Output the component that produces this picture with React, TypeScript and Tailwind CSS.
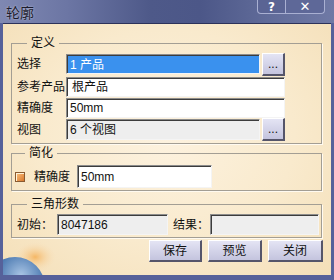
import React from "react";

const FONT = "font-['Liberation_Sans','Noto_Sans_CJK_SC',sans-serif]";

function Sunken({ className = "", children }: { className?: string; children?: React.ReactNode }) {
  return (
    <div
      className={`flex items-center border-t border-l border-t-[#8c8c8c] border-l-[#8c8c8c] border-b border-r border-b-[#f4f4f4] border-r-[#f4f4f4] shadow-[inset_1px_1px_0_#3c3c3c] pl-[3px] pt-[1px] text-[12px] leading-[14px] ${className}`}
    >
      {children}
    </div>
  );
}

function Btn({ className = "", children }: { className?: string; children?: React.ReactNode }) {
  return (
    <div
      className={`flex items-center justify-center border-t border-l border-t-[#ffffff] border-l-[#ffffff] border-b-2 border-r-2 border-b-[#55556a] border-r-[#55556a] bg-gradient-to-b from-[#e4e4f4] to-[#c4c4de] text-[12px] leading-[14px] text-[#111] ${className}`}
    >
      {children}
    </div>
  );
}

function Group({ title, className = "", children }: { title: string; className?: string; children?: React.ReactNode }) {
  return (
    <fieldset className={`border border-[#a39e94] shadow-[1px_1px_0_#fffaf0] ml-0 mr-[1px] ${className}`}>
      <legend className="ml-[10px] px-[4px] text-[12px] leading-[14px] text-[#111]">{title}</legend>
      {children}
    </fieldset>
  );
}

export default function App() {
  return (
    <div className={`w-[334px] h-[280px] flex flex-col overflow-hidden bg-[#56619a] ${FONT}`}>
      {/* title bar */}
      <div className="h-[23px] flex items-center relative bg-[linear-gradient(to_right,#7f88b2_0%,#6c76a4_20%,#4e5989_45%,#4c5788_60%,#606b99_80%,#6f79a5_100%)]">
        <span className="ml-[6px] text-[14px] leading-[16px] text-[#1c1c2c] font-['Noto_Sans_CJK_SC',sans-serif] [text-shadow:0_0_2px_#c8cce4]">
          轮廓
        </span>
        <div className="absolute right-[9px] top-0 flex">
          <div className="w-[29px] h-[14px] flex items-center justify-center border border-t-0 border-[#a9b0d2] rounded-bl-[4px] bg-[#5a6494] text-white text-[12px] leading-[12px] font-bold font-['DejaVu_Sans',sans-serif]">
            ?
          </div>
          <div className="w-[40px] h-[14px] -ml-px flex items-center justify-center border border-t-0 border-[#a9b0d2] rounded-br-[4px] bg-[#5e6898] text-white text-[13px] leading-[12px] font-bold font-['DejaVu_Sans',sans-serif]">
            ✕
          </div>
        </div>
      </div>

      {/* body */}
      <div className="flex-1 mx-[3px] mb-[5px] border-t border-[#2c325a] relative flex flex-col px-[8px] bg-[radial-gradient(ellipse_at_50%_45%,#fdf2df_0%,#f9eacd_55%,#f4dfb8_100%)] text-[#111]">
        {/* decorative globe */}
        <svg className="absolute left-0 bottom-0" width="60" height="40" viewBox="0 0 60 40">
          <defs>
            <radialGradient id="glow" cx="0.55" cy="0.5" r="0.5">
              <stop offset="0" stopColor="#f5b25a" stopOpacity="0.9" />
              <stop offset="1" stopColor="#f8e4c4" stopOpacity="0" />
            </radialGradient>
            <radialGradient id="globe" cx="0.6" cy="0.3" r="0.8">
              <stop offset="0" stopColor="#a8c4e4" />
              <stop offset="0.5" stopColor="#4a78b0" />
              <stop offset="1" stopColor="#1e3e70" />
            </radialGradient>
          </defs>
          <ellipse cx="30" cy="22" rx="22" ry="16" fill="url(#glow)" />
          <circle cx="12" cy="52" r="30" fill="url(#globe)" />
        </svg>

        <Group title="定义" className="mt-[12px] pl-[5px] pr-[36px] pt-[2px] pb-[2px]">
          <div className="h-[24px] flex items-center">
            <span className="w-[49px] text-[12px] leading-[14px]">选择</span>
            <Sunken className="flex-1 h-[20px] bg-[#3a91ee] text-white">1 产品</Sunken>
            <Btn className="w-[23px] h-[23px] ml-[2px] text-[10px]">...</Btn>
          </div>
          <div className="h-[21px] flex items-center">
            <span className="w-[49px] text-[12px] leading-[14px]">参考产品</span>
            <Sunken className="flex-1 h-[20px] bg-white pl-[5px]">根产品</Sunken>
          </div>
          <div className="h-[21px] flex items-center">
            <span className="w-[49px] text-[12px] leading-[14px]">精确度</span>
            <Sunken className="flex-1 h-[20px] bg-white">50mm</Sunken>
          </div>
          <div className="h-[23px] flex items-center">
            <span className="w-[49px] text-[12px] leading-[14px]">视图</span>
            <Sunken className="flex-1 h-[21px] bg-[#eeeeee]">6 个视图</Sunken>
            <Btn className="w-[23px] h-[23px] ml-[2px] text-[10px]">...</Btn>
          </div>
        </Group>

        <Group title="简化" className="mt-[2px] pl-[3px] pt-[5px] pb-[2px]">
          <div className="h-[23px] flex items-center">
            <div className="w-[10px] h-[10px] border border-[#8a5a30] bg-gradient-to-br from-[#fbc27e] to-[#d8782a] shadow-[inset_1px_1px_0_#fff2d8]" />
            <span className="ml-[9px] w-[43px] text-[12px] leading-[14px]">精确度</span>
            <Sunken className="w-[135px] h-[23px] bg-white">50mm</Sunken>
          </div>
        </Group>

        <Group title="三角形数" className="mt-[6px] pl-[5px] pt-[3px] pb-[2px]">
          <div className="h-[21px] flex items-center">
            <span className="w-[40px] text-[12px] leading-[14px]">初始：</span>
            <Sunken className="w-[111px] h-[21px] bg-[#eeeeee]">8047186</Sunken>
            <span className="ml-[5px] w-[37px] text-[12px] leading-[14px]">结果：</span>
            <Sunken className="w-[109px] h-[21px] bg-[#eeeeee]" />
          </div>
        </Group>

        <div className="mt-[2px] flex justify-end gap-[6px]">
          <Btn className="w-[53px] h-[22px]">保存</Btn>
          <Btn className="w-[54px] h-[22px]">预览</Btn>
          <Btn className="w-[55px] h-[22px]">关闭</Btn>
        </div>
      </div>
    </div>
  );
}
